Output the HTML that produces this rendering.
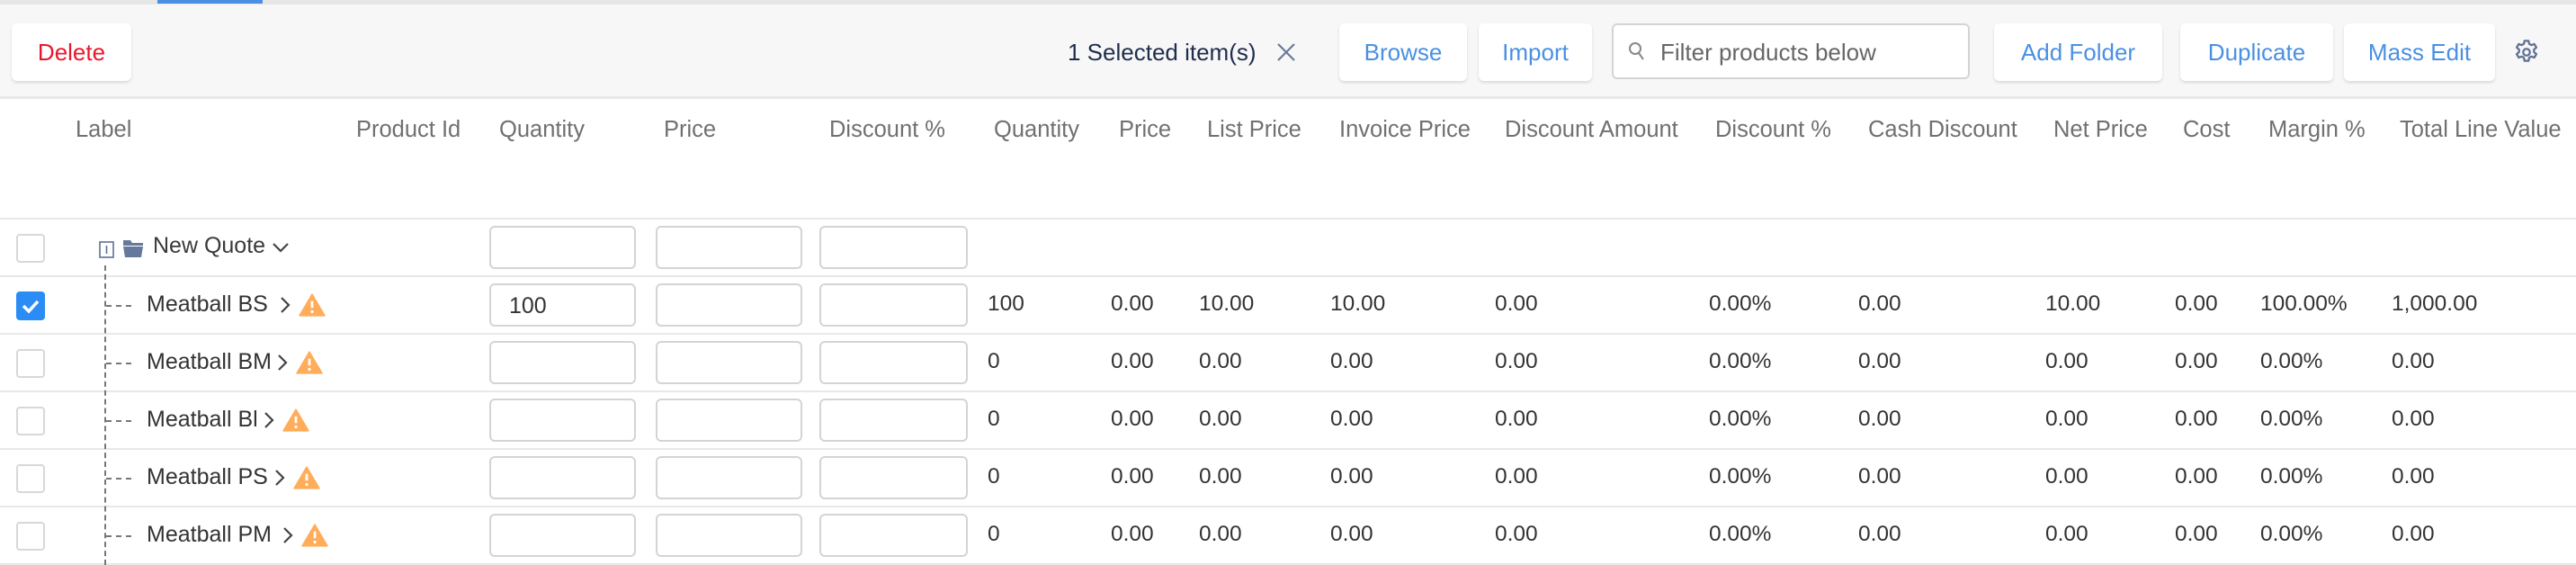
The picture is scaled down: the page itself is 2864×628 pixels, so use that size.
<!DOCTYPE html>
<html><head><meta charset="utf-8"><style>
*{box-sizing:border-box;margin:0;padding:0}
body{width:2864px;height:628px;background:#fff;font-family:"Liberation Sans",Arial,sans-serif;position:relative;overflow:hidden;color:#3a3a3a}
.a{position:absolute;white-space:nowrap}
.topline{left:0;top:0;width:2864px;height:5px;background:#e6e6e6}
.tab{left:175px;top:0;width:117px;height:4px;background:#4a90e2}
.bar{left:0;top:5px;width:2864px;height:105px;background:#f7f7f7;border-bottom:3px solid #e8e8e8}
.btn{position:absolute;top:26px;height:64px;background:#fff;border-radius:6px;box-shadow:0 2px 3px rgba(0,0,0,.12);font-size:26px;color:#4a90e2;display:flex;align-items:center;justify-content:center}
.hd{top:130px;font-size:25.5px;color:#707070}
.line{left:0;width:2864px;height:2px;background:#e8e8e8}
.cb{left:18px;width:32px;height:32px;border:2px solid #d8d8d8;border-radius:4px;background:#fff}
.inp{width:163px;height:48px;border:2px solid #d4d4d4;border-radius:6px;background:#fff;font-size:25px;padding:9px 0 0 20px;color:#333}
.v{font-size:24.5px;color:#333}
</style></head><body>
<div class="a topline"></div><div class="a tab"></div>
<div class="a bar"></div>
<div class="btn" style="left:13px;width:133px;color:#e8182c">Delete</div>
<div class="a" style="left:1187px;top:43px;font-size:26px;color:#1f2d4d">1 Selected item(s)</div>
<svg class="a" style="left:1419px;top:47px" width="22" height="22" viewBox="0 0 22 22"><path d="M2 2L20 20M20 2L2 20" stroke="#6b7a99" stroke-width="2.2"/></svg>
<div class="btn" style="left:1489px;width:142px">Browse</div>
<div class="btn" style="left:1644px;width:126px">Import</div>
<div class="a" style="left:1792px;top:26px;width:398px;height:62px;background:#fff;border:2px solid #d4d4d4;border-radius:6px"></div>
<svg class="a" style="left:1810px;top:46px" width="20" height="22" viewBox="0 0 20 22"><circle cx="8" cy="8" r="6" fill="none" stroke="#888" stroke-width="2"/><path d="M12 13L17 20" stroke="#888" stroke-width="2"/></svg>
<div class="a" style="left:1846px;top:43px;font-size:26px;color:#666">Filter products below</div>
<div class="btn" style="left:2217px;width:187px">Add Folder</div>
<div class="btn" style="left:2424px;width:170px">Duplicate</div>
<div class="btn" style="left:2606px;width:168px">Mass Edit</div>
<svg class="a" style="left:2793px;top:41px" width="32" height="34" viewBox="0 0 24 24"><path d="M10.3 2.5h3.4l.5 2.6 1.8 1 2.5-.9 1.7 2.9-2 1.7v2.1l2 1.7-1.7 2.9-2.5-.9-1.8 1-.5 2.6h-3.4l-.5-2.6-1.8-1-2.5.9-1.7-2.9 2-1.7v-2.1l-2-1.7 1.7-2.9 2.5.9 1.8-1z" fill="none" stroke="#5f7196" stroke-width="1.7" stroke-linejoin="round"/><circle cx="12" cy="12" r="2.8" fill="none" stroke="#5f7196" stroke-width="1.7"/></svg>

<div class="a hd" style="left:84px">Label</div>
<div class="a hd" style="left:396px">Product Id</div>
<div class="a hd" style="left:555px">Quantity</div>
<div class="a hd" style="left:738px">Price</div>
<div class="a hd" style="left:922px">Discount %</div>
<div class="a hd" style="left:1105px">Quantity</div>
<div class="a hd" style="left:1244px">Price</div>
<div class="a hd" style="left:1342px">List Price</div>
<div class="a hd" style="left:1489px">Invoice Price</div>
<div class="a hd" style="left:1673px">Discount Amount</div>
<div class="a hd" style="left:1907px">Discount %</div>
<div class="a hd" style="left:2077px">Cash Discount</div>
<div class="a hd" style="left:2283px">Net Price</div>
<div class="a hd" style="left:2427px">Cost</div>
<div class="a hd" style="left:2522px">Margin %</div>
<div class="a hd" style="left:2668px">Total Line Value</div>

<div class="a line" style="top:242px"></div>
<div class="a line" style="top:306px"></div>
<div class="a line" style="top:370px"></div>
<div class="a line" style="top:434px"></div>
<div class="a line" style="top:498px"></div>
<div class="a line" style="top:562px"></div>
<div class="a line" style="top:626px"></div>

<div class="a" style="left:116px;top:295px;height:333px;border-left:2px dashed #777"></div>

<div class="a cb" style="top:260px"></div>
<svg class="a" style="left:110px;top:268px" width="18" height="20" viewBox="0 0 18 20"><rect x="1" y="1" width="15" height="17" fill="none" stroke="#5f7196" stroke-width="1.6"/><path d="M8.5 5v9" stroke="#5f7196" stroke-width="1.6"/></svg>
<svg class="a" style="left:136px;top:265px" width="24" height="22" viewBox="0 0 24 22"><path d="M1 2h8l2 3h12v3H1z" fill="#66799c"/><path d="M1 9h22l-2 12H3z" fill="#66799c"/></svg>
<div class="a v" style="left:170px;top:259px;font-size:25px;color:#3a3a3a">New Quote</div>
<svg class="a" style="left:302px;top:268px" width="20" height="14" viewBox="0 0 20 14"><path d="M2 3l8 8 8-8" fill="none" stroke="#444" stroke-width="2.2"/></svg>
<div class="a inp" style="left:544px;top:251px"></div>
<div class="a inp" style="left:729px;top:251px"></div>
<div class="a inp" style="left:911px;top:251px;width:165px"></div>

<div id="rows"></div>
<script>
var names=["Meatball BS","Meatball BM","Meatball Bl","Meatball PS","Meatball PM"];
var arr=[310,307,292,304,313];
var html="";
names.forEach(function(n,i){
 var t=307+i*64, tx=t+17;
 var sel=i==0;
 html+='<div class="a cb" style="top:'+(t+17)+'px;'+(sel?'background:#2b8cf5;border-color:#2b8cf5':'')+'">'+(sel?'<svg width="28" height="28" viewBox="0 0 28 28" style="position:absolute;left:0;top:0"><path d="M6 14l6 6 10-11" fill="none" stroke="#fff" stroke-width="3.5"/></svg>':'')+'</div>';
 html+='<div class="a" style="left:118px;top:'+(t+32)+'px;width:28px;border-top:2px dashed #777"></div>';
 html+='<div class="a v" style="left:163px;top:'+tx+'px;font-size:25px">'+n+'</div>';
 var ax=arr[i];
 html+='<svg class="a" style="left:'+ax+'px;top:'+(t+21)+'px" width="14" height="22" viewBox="0 0 14 22"><path d="M3 3l8 8-8 8" fill="none" stroke="#444" stroke-width="2.2"/></svg>';
 html+='<svg class="a" style="left:'+(ax+22)+'px;top:'+(t+19)+'px" width="30" height="26" viewBox="0 0 28 24"><path d="M14 1L27 23H1z" fill="#ffad5a" stroke="#ffad5a" stroke-linejoin="round" stroke-width="1.5"/><path d="M14 8v7" stroke="#fff" stroke-width="2.6"/><circle cx="14" cy="19" r="1.5" fill="#fff"/></svg>';
 html+='<div class="a inp" style="left:544px;top:'+(t+8)+'px">'+(sel?'100':'')+'</div>';
 html+='<div class="a inp" style="left:729px;top:'+(t+8)+'px"></div>';
 html+='<div class="a inp" style="left:911px;top:'+(t+8)+'px;width:165px"></div>';
 var vals=sel?["100","0.00","10.00","10.00","0.00","0.00%","0.00","10.00","0.00","100.00%","1,000.00"]:["0","0.00","0.00","0.00","0.00","0.00%","0.00","0.00","0.00","0.00%","0.00"];
 var xs=[1098,1235,1333,1479,1662,1900,2066,2274,2418,2513,2659];
 vals.forEach(function(v,j){html+='<div class="a v" style="left:'+xs[j]+'px;top:'+tx+'px">'+v+'</div>';});
});
document.getElementById("rows").innerHTML=html;
</script>
</body></html>
